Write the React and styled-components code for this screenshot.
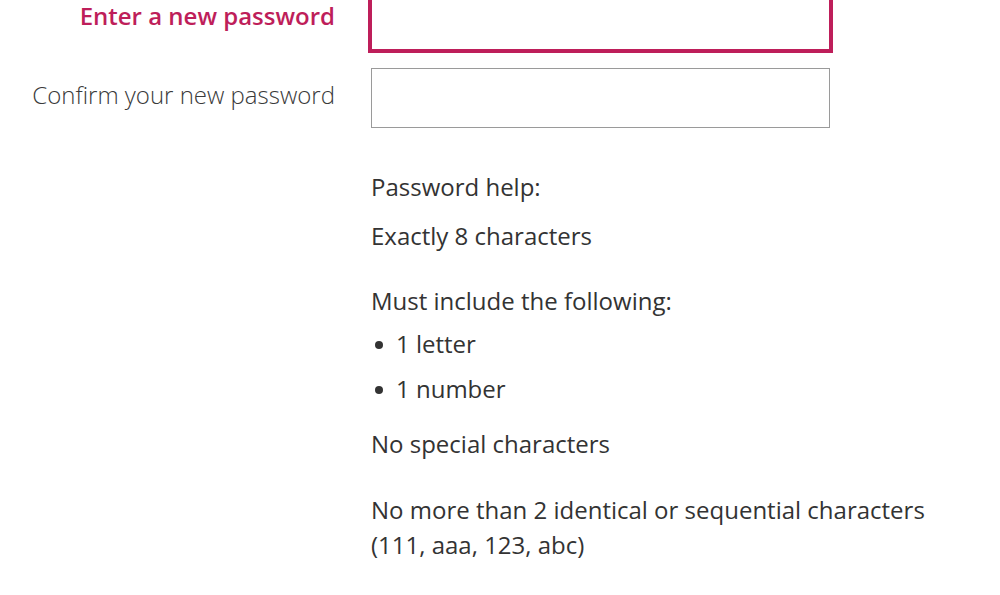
import React from "react";
import styled, { createGlobalStyle } from "styled-components";

const Global = createGlobalStyle`
  html, body { margin: 0; padding: 0; background: #fff; }
  body { font-family: "Open Sans", "Noto Sans", sans-serif; color: #333; overflow: hidden; }
`;

const Page = styled.div`
  width: 1000px;
  height: 595px;
  overflow: hidden;
`;

const Form = styled.form`
  display: grid;
  grid-template-columns: 335px 459px;
  column-gap: 36px;
  row-gap: 18px;
  margin-top: -10px;
  align-items: center;
`;

const Label = styled.label`
  justify-self: end;
  font-size: 24px;
  line-height: 35px;
  white-space: nowrap;
  color: ${(p) => (p.$active ? "#be1e5a" : "#3a3a3a")};
  font-weight: ${(p) => (p.$active ? 600 : 300)};
  margin-top: ${(p) => (p.$active ? "-10px" : "-7px")};
`;

const Input = styled.input`
  box-sizing: border-box;
  width: 459px;
  height: 60px;
  margin: 0;
  border: 1px solid #9a9a9a;
  background: #fff;
  outline: ${(p) => (p.$active ? "3px solid #be1e5a" : "none")};
  outline-offset: 0;
  ${(p) => p.$active && "border-color: #be1e5a;"}
`;

const Help = styled.div`
  margin: 41px 0 0 371px;
  font-size: 24px;
  line-height: 35px;
  color: #333;
`;

const Para = styled.p`
  margin: 0 0 ${(p) => p.$after}px;
`;

const List = styled.ul`
  list-style: none;
  margin: 0 0 20px;
  padding: 0;
`;

const Item = styled.li`
  position: relative;
  padding-left: 25px;
  margin-bottom: 10px;
  &:last-child { margin-bottom: 0; }
  &::before {
    content: "";
    position: absolute;
    left: 4px;
    top: 15px;
    width: 8px;
    height: 8px;
    border-radius: 50%;
    background: #333;
  }
`;

export default function App() {
  return (
    <Page>
      <Global />
      <Form onSubmit={(e) => e.preventDefault()}>
        <Label $active htmlFor="pw">Enter a new password</Label>
        <Input $active id="pw" type="password" />
        <Label htmlFor="pw2">Confirm your new password</Label>
        <Input id="pw2" type="password" />
      </Form>
      <Help>
        <Para $after={14}>Password help:</Para>
        <Para $after={30}>Exactly 8 characters</Para>
        <Para $after={8}>Must include the following:</Para>
        <List>
          <Item>1 letter</Item>
          <Item>1 number</Item>
        </List>
        <Para $after={31}>No special characters</Para>
        <Para $after={0}>
          No more than 2 identical or sequential characters
          <br />
          (111, aaa, 123, abc)
        </Para>
      </Help>
    </Page>
  );
}
